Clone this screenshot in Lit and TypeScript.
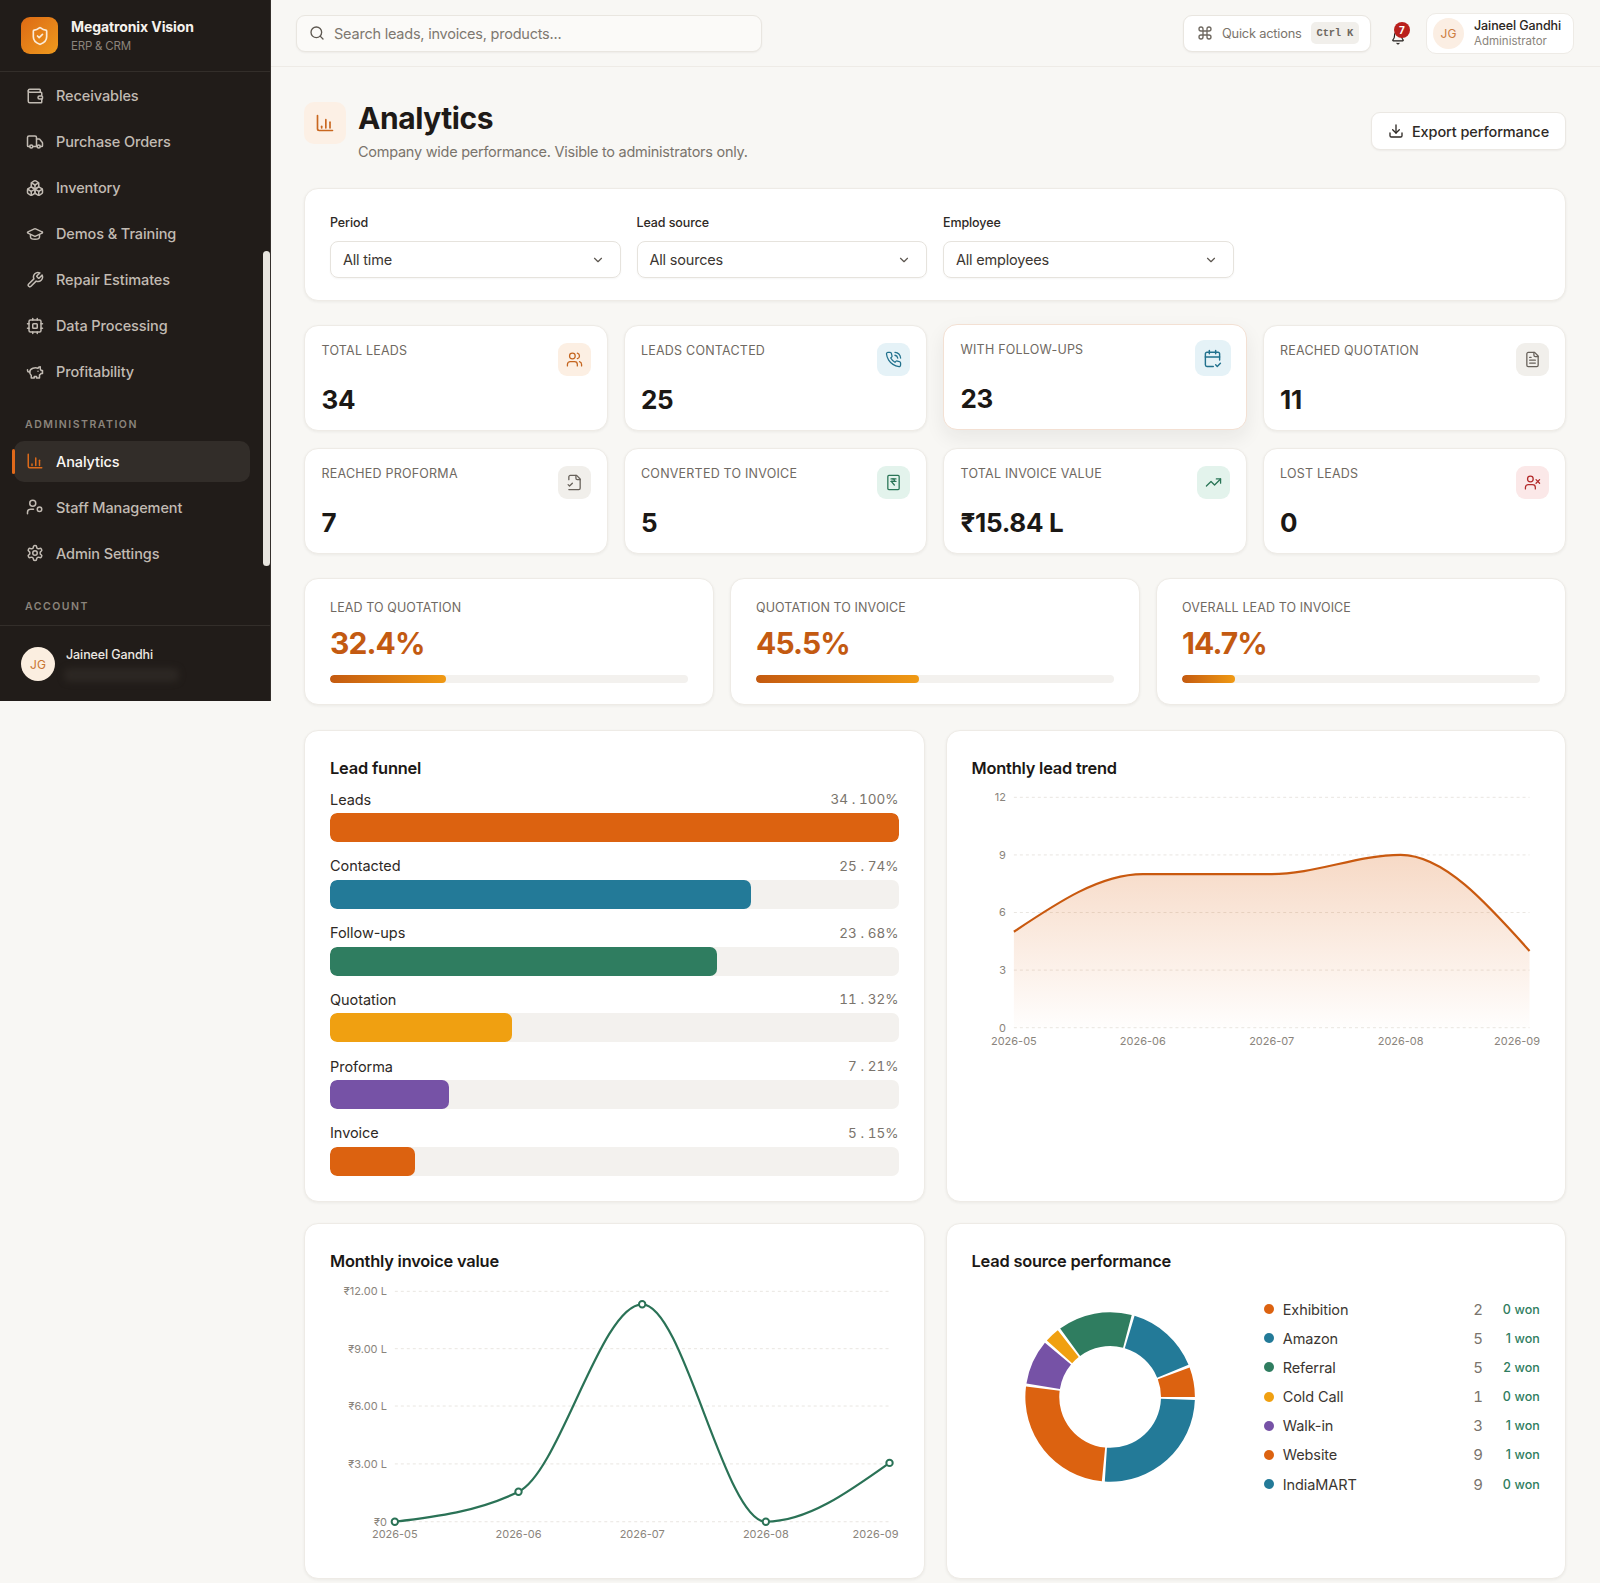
import { LitElement, html, css, svg } from "lit";
import { customElement } from "lit/decorators.js";

const ICONS: Record<string, any> = {
  wallet: svg`<path d="M19 7V4a1 1 0 0 0-1-1H5a2 2 0 0 0 0 4h15a1 1 0 0 1 1 1v4h-3a2 2 0 0 0 0 4h3a1 1 0 0 0 1-1v-2a1 1 0 0 0-1-1"/><path d="M3 5v14a2 2 0 0 0 2 2h15a1 1 0 0 0 1-1v-4"/>`,
  truck: svg`<path d="M14 18V6a2 2 0 0 0-2-2H4a2 2 0 0 0-2 2v11a1 1 0 0 0 1 1h2"/><path d="M15 18H9"/><path d="M19 18h2a1 1 0 0 0 1-1v-3.65a1 1 0 0 0-.22-.624l-3.48-4.35A1 1 0 0 0 17.52 8H14"/><circle cx="17" cy="18" r="2"/><circle cx="7" cy="18" r="2"/>`,
  boxes: svg`<path d="M2.97 12.92A2 2 0 0 0 2 14.63v3.24a2 2 0 0 0 .97 1.71l3 1.8a2 2 0 0 0 2.06 0L12 19v-5.5l-5-3-4.03 2.42Z"/><path d="m7 16.5-4.74-2.85"/><path d="m7 16.5 5-3"/><path d="M7 16.5v5.17"/><path d="M12 13.5V19l3.97 2.38a2 2 0 0 0 2.06 0l3-1.8a2 2 0 0 0 .97-1.71v-3.24a2 2 0 0 0-.97-1.71L17 10.5l-5 3Z"/><path d="m17 16.5-5-3"/><path d="m17 16.5 4.74-2.85"/><path d="M17 16.5v5.17"/><path d="M7.97 4.42A2 2 0 0 0 7 6.13v4.37l5 3 5-3V6.13a2 2 0 0 0-.97-1.71l-3-1.8a2 2 0 0 0-2.06 0l-3 1.8Z"/><path d="M12 8 7.26 5.15"/><path d="m12 8 4.74-2.85"/><path d="M12 13.5V8"/>`,
  cap: svg`<path d="M21.42 10.922a1 1 0 0 0-.019-1.838L12.83 5.18a2 2 0 0 0-1.66 0L2.6 9.08a1 1 0 0 0 0 1.832l8.57 3.908a2 2 0 0 0 1.66 0z"/><path d="M6 12.5V16a6 3 0 0 0 12 0v-3.5"/>`,
  wrench: svg`<path d="M14.7 6.3a1 1 0 0 0 0 1.4l1.6 1.6a1 1 0 0 0 1.4 0l3.77-3.77a6 6 0 0 1-7.94 7.94l-6.91 6.91a2.12 2.12 0 0 1-3-3l6.91-6.91a6 6 0 0 1 7.94-7.94l-3.76 3.76z"/>`,
  cpu: svg`<rect x="4" y="4" width="16" height="16" rx="2"/><rect x="9" y="9" width="6" height="6" rx="1"/><path d="M15 2v2M15 20v2M2 15h2M2 9h2M20 15h2M20 9h2M9 2v2M9 20v2"/>`,
  piggy: svg`<path d="M19 5c-1.5 0-2.8 1.4-3 2-3.5-1.5-11-.3-11 5 0 1.8 0 3 2 4.5V20h4v-2h3v2h4v-4c1-.5 1.7-1 2-2h2v-4h-2c0-1-.5-1.5-1-2V5z"/><path d="M2 9v1c0 1.1.9 2 2 2h1"/><path d="M16 11h.01"/>`,
  chart: svg`<path d="M3 3v16a2 2 0 0 0 2 2h16"/><path d="M8 18v-2"/><path d="M13 18V8"/><path d="M18 18v-7"/>`,
  staff: svg`<path d="M10 15H6a4 4 0 0 0-4 4v2"/><circle cx="9" cy="7" r="4"/><circle cx="18" cy="15" r="3"/>`,
  gear: svg`<path d="M12.22 2h-.44a2 2 0 0 0-2 2v.18a2 2 0 0 1-1 1.73l-.43.25a2 2 0 0 1-2 0l-.15-.08a2 2 0 0 0-2.73.73l-.22.38a2 2 0 0 0 .73 2.73l.15.1a2 2 0 0 1 1 1.72v.51a2 2 0 0 1-1 1.74l-.15.09a2 2 0 0 0-.73 2.73l.22.38a2 2 0 0 0 2.73.73l.15-.08a2 2 0 0 1 2 0l.43.25a2 2 0 0 1 1 1.73V20a2 2 0 0 0 2 2h.44a2 2 0 0 0 2-2v-.18a2 2 0 0 1 1-1.73l.43-.25a2 2 0 0 1 2 0l.15.08a2 2 0 0 0 2.73-.73l.22-.39a2 2 0 0 0-.73-2.73l-.15-.08a2 2 0 0 1-1-1.74v-.5a2 2 0 0 1 1-1.74l.15-.09a2 2 0 0 0 .73-2.73l-.22-.38a2 2 0 0 0-2.73-.73l-.15.08a2 2 0 0 1-2 0l-.43-.25a2 2 0 0 1-1-1.73V4a2 2 0 0 0-2-2z"/><circle cx="12" cy="12" r="3"/>`,
  shield: svg`<path d="M20 13c0 5-3.5 7.5-7.66 8.95a1 1 0 0 1-.67-.01C7.5 20.5 4 18 4 13V6a1 1 0 0 1 1-1c2 0 4.5-1.2 6.24-2.72a1.17 1.17 0 0 1 1.52 0C14.51 3.81 17 5 19 5a1 1 0 0 1 1 1z"/><path d="m9 12 2 2 4-4"/>`,
  search: svg`<circle cx="11" cy="11" r="8"/><path d="m21 21-4.3-4.3"/>`,
  chevron: svg`<path d="m6 9 6 6 6-6"/>`,
  command: svg`<path d="M15 6v12a3 3 0 1 0 3-3H6a3 3 0 1 0 3 3V6a3 3 0 1 0-3 3h12a3 3 0 1 0-3-3"/>`,
  bell: svg`<path d="M10.268 21a2 2 0 0 0 3.464 0"/><path d="M3.262 15.326A1 1 0 0 0 4 17h16a1 1 0 0 0 .74-1.673C19.41 13.956 18 12.499 18 8A6 6 0 0 0 6 8c0 4.499-1.411 5.956-2.738 7.326"/>`,
  download: svg`<path d="M21 15v4a2 2 0 0 1-2 2H5a2 2 0 0 1-2-2v-4"/><path d="m7 10 5 5 5-5"/><path d="M12 15V3"/>`,
  users: svg`<path d="M16 21v-2a4 4 0 0 0-4-4H6a4 4 0 0 0-4 4v2"/><circle cx="9" cy="7" r="4"/><path d="M22 21v-2a4 4 0 0 0-3-3.87"/><path d="M16 3.13a4 4 0 0 1 0 7.75"/>`,
  phone: svg`<path d="M22 16.92v3a2 2 0 0 1-2.18 2 19.79 19.79 0 0 1-8.63-3.07 19.5 19.5 0 0 1-6-6 19.79 19.79 0 0 1-3.07-8.67A2 2 0 0 1 4.11 2h3a2 2 0 0 1 2 1.72 12.84 12.84 0 0 0 .7 2.81 2 2 0 0 1-.45 2.11L8.09 9.91a16 16 0 0 0 6 6l1.27-1.27a2 2 0 0 1 2.11-.45 12.84 12.84 0 0 0 2.81.7A2 2 0 0 1 22 16.92z"/><path d="M14.05 2a9 9 0 0 1 8 7.94"/><path d="M14.05 6A5 5 0 0 1 18 10"/>`,
  calendar: svg`<path d="M8 2v4"/><path d="M16 2v4"/><path d="M21 14V6a2 2 0 0 0-2-2H5a2 2 0 0 0-2 2v14a2 2 0 0 0 2 2h8"/><path d="M3 10h18"/><path d="m16 20 2 2 4-4"/>`,
  filetext: svg`<path d="M15 2H6a2 2 0 0 0-2 2v16a2 2 0 0 0 2 2h12a2 2 0 0 0 2-2V7Z"/><path d="M14 2v4a2 2 0 0 0 2 2h4"/><path d="M10 9H8"/><path d="M16 13H8"/><path d="M16 17H8"/>`,
  filecheck: svg`<path d="M4 22h14a2 2 0 0 0 2-2V7l-5-5H6a2 2 0 0 0-2 2v4"/><path d="M14 2v4a2 2 0 0 0 2 2h4"/><path d="m3 15 2 2 4-4"/>`,
  rupee: svg`<rect x="4" y="2" width="16" height="20" rx="1.5"/><path d="M8.5 7h7"/><path d="M8.5 10.5h7"/><path d="M11 7c3.2 0 3.2 3.5 0 3.5H8.8l4.4 5"/>`,
  trend: svg`<path d="M22 7 13.5 15.5 8.5 10.5 2 17"/><path d="M16 7h6v6"/>`,
  userx: svg`<path d="M16 21v-2a4 4 0 0 0-4-4H6a4 4 0 0 0-4 4v2"/><circle cx="9" cy="7" r="4"/><path d="m17 8 5 5"/><path d="m22 8-5 5"/>`,
};

const icon = (name: string, cls = "") => html`<svg class="ic ${cls}" viewBox="0 0 24 24" fill="none" stroke="currentColor" stroke-width="2" stroke-linecap="round" stroke-linejoin="round">${ICONS[name]}</svg>`;

function monotone(pts: number[][]): string {
  const n = pts.length;
  const h: number[] = [], s: number[] = [], t: number[] = new Array(n).fill(0);
  for (let i = 0; i < n - 1; i++) {
    h[i] = pts[i + 1][0] - pts[i][0];
    s[i] = (pts[i + 1][1] - pts[i][1]) / h[i];
  }
  for (let i = 1; i < n - 1; i++) {
    const p = (s[i - 1] * h[i] + s[i] * h[i - 1]) / (h[i - 1] + h[i]);
    t[i] = (Math.sign(s[i - 1]) + Math.sign(s[i])) * Math.min(Math.abs(s[i - 1]), Math.abs(s[i]), 0.5 * Math.abs(p));
  }
  t[0] = (3 * s[0] - t[1]) / 2;
  t[n - 1] = (3 * s[n - 2] - t[n - 2]) / 2;
  let d = `M${pts[0][0]},${pts[0][1]}`;
  for (let i = 0; i < n - 1; i++) {
    const k = h[i] / 3;
    d += `C${pts[i][0] + k},${pts[i][1] + k * t[i]} ${pts[i + 1][0] - k},${pts[i + 1][1] - k * t[i + 1]} ${pts[i + 1][0]},${pts[i + 1][1]}`;
  }
  return d;
}

function sector(cx: number, cy: number, r0: number, r1: number, a0: number, a1: number): string {
  const p = (r: number, a: number) => {
    const rad = (a * Math.PI) / 180;
    return `${(cx + r * Math.cos(rad)).toFixed(2)},${(cy - r * Math.sin(rad)).toFixed(2)}`;
  };
  const large = a1 - a0 > 180 ? 1 : 0;
  return `M${p(r1, a0)}A${r1},${r1} 0 ${large} 0 ${p(r1, a1)}L${p(r0, a1)}A${r0},${r0} 0 ${large} 1 ${p(r0, a0)}Z`;
}

const ORANGE = "#dc6210", TEAL = "#237a98", GREEN = "#2f7d60", AMBER = "#f0a011", PURPLE = "#7652a6";

const NAV1 = [["wallet", "Receivables"], ["truck", "Purchase Orders"], ["boxes", "Inventory"], ["cap", "Demos & Training"], ["wrench", "Repair Estimates"], ["cpu", "Data Processing"], ["piggy", "Profitability"]];
const KPIS = [
  ["TOTAL LEADS", "34", "users", "t-orange"], ["LEADS CONTACTED", "25", "phone", "t-blue"], ["WITH FOLLOW-UPS", "23", "calendar", "t-blue"], ["REACHED QUOTATION", "11", "filetext", "t-gray"],
  ["REACHED PROFORMA", "7", "filecheck", "t-gray"], ["CONVERTED TO INVOICE", "5", "rupee", "t-green"], ["TOTAL INVOICE VALUE", "₹15.84 L", "trend", "t-green"], ["LOST LEADS", "0", "userx", "t-red"],
];
const RATIOS: [string, number][] = [["LEAD TO QUOTATION", 32.4], ["QUOTATION TO INVOICE", 45.5], ["OVERALL LEAD TO INVOICE", 14.7]];
const FUNNEL: [string, string, number, string][] = [
  ["Leads", "34 . 100%", 100, ORANGE], ["Contacted", "25 . 74%", 74, TEAL], ["Follow-ups", "23 . 68%", 68, GREEN],
  ["Quotation", "11 . 32%", 32, AMBER], ["Proforma", "7 . 21%", 21, PURPLE], ["Invoice", "5 . 15%", 15, ORANGE],
];
const SOURCES: [string, number, number, string][] = [
  ["Exhibition", 2, 0, ORANGE], ["Amazon", 5, 1, TEAL], ["Referral", 5, 2, GREEN], ["Cold Call", 1, 0, AMBER],
  ["Walk-in", 3, 1, PURPLE], ["Website", 9, 1, ORANGE], ["IndiaMART", 9, 0, TEAL],
];

@customElement("app-root")
export class AppRoot extends LitElement {
  static styles = css`
    :host { display: block; font-family: Inter, "Noto Sans", sans-serif; color: #1e1a17; background: #f8f7f4; height: 1583px; overflow: hidden; }
    * { box-sizing: border-box; }
    .ic { display: block; width: 18px; height: 18px; flex: none; }
    .app { display: flex; align-items: flex-start; height: 1583px; }

    .side { position: relative; width: 271px; height: 701px; flex: none; background: #211c19; color: #c2bbb3; border-right: 1px solid #35302c; display: flex; flex-direction: column; }
    .brand { height: 72px; flex: none; display: flex; align-items: center; gap: 13px; padding: 0 0 0 21px; border-bottom: 1px solid #332e2a; }
    .logo { width: 37px; height: 37px; border-radius: 9px; background: linear-gradient(135deg, #dd6a14, #ee9a1e); color: #fbecd9; display: flex; align-items: center; justify-content: center; }
    .logo .ic { width: 20px; height: 20px; }
    .bname { font-size: 14px; font-weight: 700; color: #f6f2ed; line-height: 19px; letter-spacing: -0.1px; }
    .bsub { font-size: 11.5px; color: #8b847c; line-height: 18px; margin-top: 1px; letter-spacing: -0.2px; }
    .nav { flex: 1; overflow: hidden; display: flex; flex-direction: column; gap: 5px; padding: 3px 20px 0 14px; }
    .item { height: 41px; flex: none; display: flex; align-items: center; gap: 12px; padding-left: 12px; border-radius: 10px; font-size: 14.5px; position: relative; font-weight: 500; letter-spacing: -0.1px; }
    .item.active { background: #322d29; color: #fbf8f4; }
    .item.active .ic { color: #dc6a1a; }
    .item.active::before { content: ""; position: absolute; left: -2px; top: 8px; width: 3px; height: 25px; border-radius: 2px; background: #e0691a; }
    .seclabel { font-size: 10.5px; line-height: 14px; letter-spacing: 1.5px; color: #8b847c; font-weight: 600; padding: 20.5px 0 4px 11px; flex: none; }
    .seclabel.acc { padding-top: 21.5px; }
    .foot { height: 76px; flex: none; border-top: 1px solid #332e2a; display: flex; align-items: flex-start; gap: 11px; padding: 21px 0 0 21px; }
    .avatar { width: 34px; height: 34px; border-radius: 50%; background: #fbeee0; color: #c9742f; display: flex; align-items: center; justify-content: center; font-size: 12px; flex: none; }
    .fname { font-size: 12.5px; color: #ede8e2; font-weight: 500; line-height: 18px; margin-top: -1px; letter-spacing: -0.1px; }
    .redact { width: 115px; height: 14px; margin: 4px 0 0 -2px; border-radius: 6px; background: #2c2723; filter: blur(3px); }
    .sbar { position: absolute; top: 251px; right: 0; width: 7px; height: 315px; border-radius: 4px; background: #e8e5df; }

    .main { flex: 1; min-width: 0; display: flex; flex-direction: column; }
    .top { height: 67px; flex: none; border-bottom: 1px solid #eeebe6; display: flex; align-items: center; padding: 0 26px 0 25px; }
    .search { width: 466px; height: 37px; border: 1px solid #e9e6e0; border-radius: 9px; background: #fbfaf8; box-shadow: 0 1px 2px rgba(30,26,23,.05); display: flex; align-items: center; gap: 9px; padding: 0 12px; color: #7e7870; font-size: 14.5px; letter-spacing: -0.22px; }
    .search .ic { width: 16px; height: 16px; color: #5d5750; }
    .spacer { flex: 1; }
    .quick { width: 188px; height: 37px; border: 1px solid #e9e6e0; border-radius: 9px; background: #fff; box-shadow: 0 1px 2px rgba(30,26,23,.05); display: flex; align-items: center; gap: 9px; padding: 0 14px 0 13px; color: #7a746c; font-size: 12.8px; letter-spacing: -0.2px; white-space: nowrap; }
    .quick .ic { width: 16px; height: 16px; color: #6e6860; }
    kbd { margin-left: auto; height: 22px; padding: 0 6px; border-radius: 5px; background: #f1efeb; color: #6e6860; font: 700 10.5px "Liberation Mono", monospace; display: flex; align-items: center; white-space: nowrap; }
    .bellwrap { position: relative; width: 14px; height: 14px; margin: 10px 21px 0 20px; color: #1e1a17; }
    .bellwrap .ic { width: 14px; height: 14px; }
    .badge { position: absolute; left: 3px; top: -9px; width: 16px; height: 16px; border-radius: 50%; background: #b9201c; color: #fff; font-size: 10px; font-weight: 700; display: flex; align-items: center; justify-content: center; }
    .chip { width: 148px; height: 41px; border: 1px solid #eeebe6; border-radius: 10px; background: #fff; display: flex; align-items: center; gap: 10px; padding: 0 6px; }
    .chip .avatar { width: 31px; height: 31px; background: #fbeee3; color: #cc7c40; font-size: 12px; }
    .cname { font-size: 12.5px; font-weight: 500; line-height: 17px; color: #2b2622; letter-spacing: -0.1px; white-space: nowrap; }
    .crole { font-size: 11.5px; line-height: 15px; color: #8a847c; }

    .content { padding: 32px 34px 0 33px; display: flex; flex-direction: column; }
    .head { display: flex; align-items: center; margin-bottom: 25px; }
    .hicon { width: 42px; height: 42px; border-radius: 10px; background: #fcf0e5; color: #c9671f; display: flex; align-items: center; justify-content: center; margin: -17px 12px 0 0; flex: none; }
    .hicon .ic { width: 20px; height: 20px; }
    h1 { margin: 0; font-size: 30px; line-height: 38px; font-weight: 700; letter-spacing: -0.45px; }
    .sub { margin-top: 4px; font-size: 14.5px; line-height: 22px; color: #7a746c; letter-spacing: -0.26px; }
    .export { margin-left: auto; width: 195px; height: 38px; border: 1px solid #ebe8e3; border-radius: 9px; background: #fff; box-shadow: 0 1px 2px rgba(30,26,23,.05); display: flex; align-items: center; justify-content: center; gap: 8px; font-size: 14.5px; font-weight: 500; color: #2e2925; letter-spacing: -0.1px; }
    .export .ic { width: 16px; height: 16px; }

    .card { background: #fff; border: 1px solid #eeebe6; border-radius: 14px; box-shadow: 0 1px 3px rgba(30,26,23,.06); }
    .filters { height: 113px; padding: 25px; margin-bottom: 24px; display: grid; grid-template-columns: repeat(4, 1fr); gap: 16px; }
    .flabel { font-size: 12.5px; font-weight: 500; line-height: 18px; margin-bottom: 9px; color: #2e2925; letter-spacing: -0.1px; }
    .select { height: 37px; border: 1px solid #e6e3dd; border-radius: 8px; display: flex; align-items: center; justify-content: space-between; padding: 0 15px 0 12px; font-size: 14.5px; color: #3b3631; letter-spacing: -0.2px; box-shadow: 0 1px 2px rgba(30,26,23,.04); }
    .select .ic { width: 14px; height: 14px; color: #5d5750; }

    .kpis { display: grid; grid-template-columns: repeat(4, 1fr); gap: 17.5px 16px; margin-bottom: 24.5px; }
    .kpi { height: 105.5px; padding: 17px 16px 17px 16.5px; display: flex; justify-content: space-between; position: relative; }
    .kpi.hov { transform: translateY(-1px); border-color: #f3e0d3; box-shadow: 0 8px 20px rgba(30,26,23,.07); }
    .klabel { font-size: 12.5px; line-height: 16px; color: #6f6962; letter-spacing: 0.22px; }
    .kval { font-size: 26px; line-height: 32px; font-weight: 700; margin-top: 25px; color: #1b1815; letter-spacing: -0.3px; }
    .kicon { width: 33px; height: 33px; border-radius: 9px; display: flex; align-items: center; justify-content: center; flex: none; }
    .kicon .ic { width: 17px; height: 17px; stroke-width: 1.8; }
    .kpi.hov .kicon { width: 36px; height: 36px; margin: -2px -1px 0 0; }
    .kpi.hov .kicon .ic { width: 19px; height: 19px; }
    .t-orange { background: #fcefe3; color: #c4651f; }
    .t-blue { background: #e5f2f7; color: #21718d; }
    .t-gray { background: #f1efeb; color: #67615a; }
    .t-green { background: #e3f3ec; color: #2a7556; }
    .t-red { background: #fbe8e8; color: #b32a2a; }

    .ratios { display: grid; grid-template-columns: repeat(3, 1fr); gap: 16px; margin-bottom: 25px; }
    .ratio { height: 127px; padding: 21px 25px 0; }
    .rlabel { font-size: 12.5px; line-height: 16px; color: #6f6962; letter-spacing: 0.1px; }
    .rval { font-size: 30px; line-height: 38px; font-weight: 700; color: #c35a11; margin-top: 8px; letter-spacing: -0.9px; }
    .track { height: 8px; border-radius: 4px; background: #f3f1ee; margin-top: 13px; overflow: hidden; }
    .fill { height: 100%; border-radius: 4px; background: linear-gradient(90deg, #c45a10, #f09a14); }

    .charts { display: grid; grid-template-columns: 1fr 1fr; gap: 21px 21px; }
    .panel { padding: 25px; }
    h3 { margin: 0; font-size: 16.4px; line-height: 24px; font-weight: 600; color: #1b1815; letter-spacing: -0.2px; }
    .funnel { height: 472px; }
    .frows { display: flex; flex-direction: column; gap: 13.3px; margin-top: 8.5px; }
    .frow-top { display: flex; justify-content: space-between; align-items: center; height: 21px; margin-bottom: 3.5px; font-size: 14.5px; color: #2e2925; letter-spacing: -0.05px; }
    .fpct { font-size: 13.5px; color: #7a746c; letter-spacing: 0; font-variant-numeric: tabular-nums; }
    .ftrack { height: 29px; border-radius: 7px; background: #f3f1ee; overflow: hidden; }
    .ffill { height: 100%; border-radius: 7px; }
    .chart { display: block; width: 100%; margin-top: 5px; overflow: visible; }
    .chart.inv { margin-top: 12px; }
    .chart text { font: 400 11px Inter, sans-serif; fill: #8a847c; }
    .low { height: 356px; }
    .split { display: grid; grid-template-columns: 1fr 1fr; gap: 16px; margin-top: 12px; }
    .donut { display: block; width: 100%; height: 224px; }
    .legend { padding-top: 13.5px; display: flex; flex-direction: column; gap: 8.2px; }
    .lrow { height: 21px; display: flex; align-items: center; font-size: 14.5px; color: #3b3631; letter-spacing: -0.1px; }
    .dot { width: 10px; height: 10px; border-radius: 50%; margin-right: 9px; flex: none; }
    .lname { flex: 1; }
    .lcount { font-size: 15px; color: #7a746c; width: 24px; text-align: center; margin-right: 10px; font-variant-numeric: tabular-nums; }
    .lwon { width: 40px; text-align: right; font-size: 12.5px; font-weight: 500; color: #2f7d60; letter-spacing: 0.1px; white-space: nowrap; }
  `;

  private renderSide() {
    return html`<aside class="side">
      <div class="brand">
        <div class="logo">${icon("shield")}</div>
        <div><div class="bname">Megatronix Vision</div><div class="bsub">ERP &amp; CRM</div></div>
      </div>
      <nav class="nav">
        ${NAV1.map(([i, t]) => html`<div class="item">${icon(i)}<span>${t}</span></div>`)}
        <div class="seclabel">ADMINISTRATION</div>
        <div class="item active">${icon("chart")}<span>Analytics</span></div>
        <div class="item">${icon("staff")}<span>Staff Management</span></div>
        <div class="item">${icon("gear")}<span>Admin Settings</span></div>
        <div class="seclabel acc">ACCOUNT</div>
      </nav>
      <div class="foot">
        <div class="avatar">JG</div>
        <div><div class="fname">Jaineel Gandhi</div><div class="redact"></div></div>
      </div>
      <div class="sbar"></div>
    </aside>`;
  }

  private renderTop() {
    return html`<header class="top">
      <div class="search">${icon("search")}<span>Search leads, invoices, products...</span></div>
      <div class="spacer"></div>
      <div class="quick">${icon("command")}<span>Quick actions</span><kbd>Ctrl K</kbd></div>
      <div class="bellwrap">${icon("bell")}<span class="badge">7</span></div>
      <div class="chip">
        <div class="avatar">JG</div>
        <div><div class="cname">Jaineel Gandhi</div><div class="crole">Administrator</div></div>
      </div>
    </header>`;
  }

  private renderTrend() {
    const ox = 972, oy = 785;
    const xs = [1014, 1143.25, 1272.5, 1401.75, 1531];
    const vals = [5, 8, 8, 9, 4];
    const pts = xs.map((x, i) => [x - ox, 1028 - vals[i] * 19.25 - oy]);
    const line = monotone(pts);
    const area = `${line}L${pts[4][0]},${1028 - oy}L${pts[0][0]},${1028 - oy}Z`;
    const labels = [[1014, "2026-05"], [1143.25, "2026-06"], [1272.5, "2026-07"], [1401.75, "2026-08"], [1518.5, "2026-09"]] as [number, string][];
    return html`<svg class="chart" viewBox="0 0 570 270" height="270">
      <defs><linearGradient id="ga" x1="0" y1="0" x2="0" y2="1"><stop offset="0" stop-color="#dc6210" stop-opacity=".24"/><stop offset="1" stop-color="#dc6210" stop-opacity=".01"/></linearGradient></defs>
      ${[12, 9, 6, 3, 0].map((v) => {
        const y = 1028 - v * 19.25 - oy;
        return svg`<line x1="${1014 - ox}" x2="${1531 - ox}" y1="${y}" y2="${y}" stroke="#e9e6e1" stroke-dasharray="3 3"/><text x="${1006 - ox}" y="${y + 4}" text-anchor="end">${v}</text>`;
      })}
      <path d="${area}" fill="url(#ga)"/>
      <path d="${line}" fill="none" stroke="#c9590f" stroke-width="2.2"/>
      ${labels.map(([x, t]) => svg`<text x="${x - ox}" y="${1045 - oy}" text-anchor="middle">${t}</text>`)}
    </svg>`;
  }

  private renderInvoice() {
    const ox = 330, oy = 1285;
    const raw = [[395, 1522], [519, 1492], [643, 1304], [767, 1522], [891, 1463]];
    const pts = raw.map(([x, y]) => [x - ox, y - oy]);
    const line = monotone(pts);
    const grid: [number, string][] = [[1291, "₹12.00 L"], [1348.5, "₹9.00 L"], [1406, "₹6.00 L"], [1464, "₹3.00 L"], [1522, "₹0"]];
    const labels = [[395, "2026-05"], [519, "2026-06"], [643, "2026-07"], [767, "2026-08"], [877, "2026-09"]] as [number, string][];
    return html`<svg class="chart inv" viewBox="0 0 570 267" height="267">
      ${grid.map(([y, t]) => svg`<line x1="${395 - ox}" x2="${893 - ox}" y1="${y - oy}" y2="${y - oy}" stroke="#e9e6e1" stroke-dasharray="3 3"/><text x="${387 - ox}" y="${y - oy + 4}" text-anchor="end">${t}</text>`)}
      <path d="${line}" fill="none" stroke="#2a7256" stroke-width="2.2"/>
      ${pts.map(([x, y]) => svg`<circle cx="${x}" cy="${y}" r="3.2" fill="#fff" stroke="#2a7256" stroke-width="2"/>`)}
      ${labels.map(([x, t]) => svg`<text x="${x - ox}" y="${1538 - oy}" text-anchor="middle">${t}</text>`)}
    </svg>`;
  }

  private renderDonut() {
    const total = SOURCES.reduce((a, s) => a + s[1], 0);
    const pad = 2;
    const span = 360 - SOURCES.length * pad;
    let a = 0;
    const paths = SOURCES.map(([, v, , c]) => {
      const a0 = a;
      const a1 = a + (v / total) * span;
      a = a1 + pad;
      return svg`<path d="${sector(138.5, 112, 51, 85, a0, a1)}" fill="${c}"/>`;
    });
    return html`<svg class="donut" viewBox="0 0 277 224">${paths}</svg>`;
  }

  render() {
    return html`<div class="app">
      ${this.renderSide()}
      <div class="main">
        ${this.renderTop()}
        <main class="content">
          <div class="head">
            <div class="hicon">${icon("chart")}</div>
            <div>
              <h1>Analytics</h1>
              <div class="sub">Company wide performance. Visible to administrators only.</div>
            </div>
            <div class="export">${icon("download")}<span>Export performance</span></div>
          </div>

          <section class="card filters">
            ${[["Period", "All time"], ["Lead source", "All sources"], ["Employee", "All employees"]].map(
              ([l, v]) => html`<div><div class="flabel">${l}</div><div class="select"><span>${v}</span>${icon("chevron")}</div></div>`
            )}
          </section>

          <section class="kpis">
            ${KPIS.map(
              ([l, v, i, t], n) => html`<div class="card kpi ${n === 2 ? "hov" : ""}">
                <div><div class="klabel">${l}</div><div class="kval">${v}</div></div>
                <div class="kicon ${t}">${icon(i)}</div>
              </div>`
            )}
          </section>

          <section class="ratios">
            ${RATIOS.map(
              ([l, v]) => html`<div class="card ratio">
                <div class="rlabel">${l}</div>
                <div class="rval">${v}%</div>
                <div class="track"><div class="fill" style="width:${v}%"></div></div>
              </div>`
            )}
          </section>

          <section class="charts">
            <div class="card panel funnel">
              <h3>Lead funnel</h3>
              <div class="frows">
                ${FUNNEL.map(
                  ([l, p, w, c]) => html`<div>
                    <div class="frow-top"><span>${l}</span><span class="fpct">${p}</span></div>
                    <div class="ftrack"><div class="ffill" style="width:${w}%;background:${c}"></div></div>
                  </div>`
                )}
              </div>
            </div>
            <div class="card panel">
              <h3>Monthly lead trend</h3>
              ${this.renderTrend()}
            </div>
            <div class="card panel low">
              <h3>Monthly invoice value</h3>
              ${this.renderInvoice()}
            </div>
            <div class="card panel low">
              <h3>Lead source performance</h3>
              <div class="split">
                ${this.renderDonut()}
                <div class="legend">
                  ${SOURCES.map(
                    ([n, c, w, col]) => html`<div class="lrow">
                      <span class="dot" style="background:${col}"></span>
                      <span class="lname">${n}</span>
                      <span class="lcount">${c}</span>
                      <span class="lwon">${w} won</span>
                    </div>`
                  )}
                </div>
              </div>
            </div>
          </section>
        </main>
      </div>
    </div>`;
  }
}
